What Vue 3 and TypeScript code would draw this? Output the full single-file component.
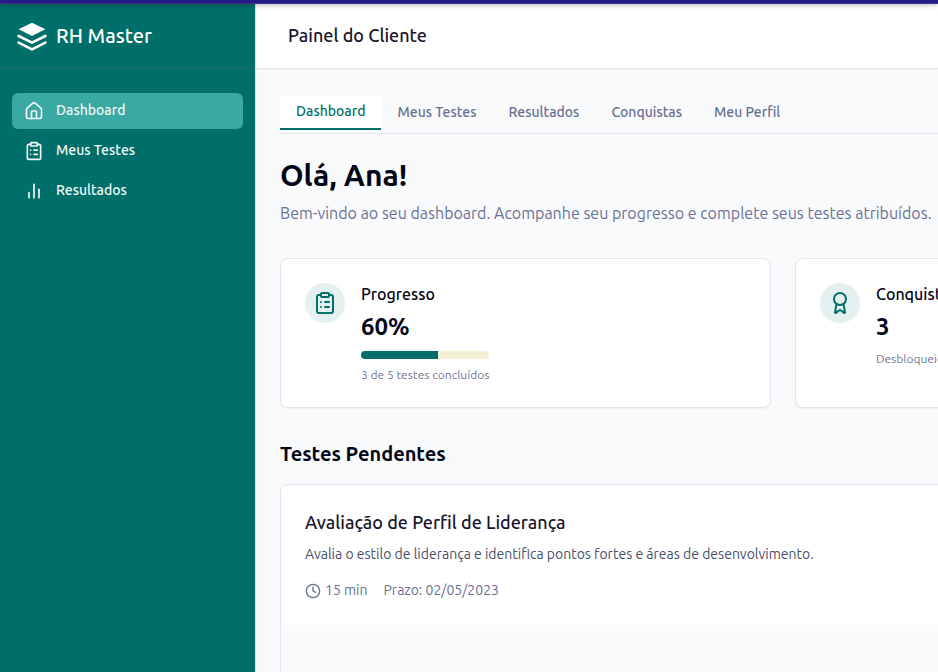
<script setup lang="ts">
import { ref } from 'vue'

interface NavItem {
  id: string
  label: string
  paths: string[]
}

interface PendingTest {
  title: string
  description: string
  minutes: number
  deadline: string
}

const clipboardPaths: string[] = [
  'M9 2h6a1 1 0 0 1 1 1v2a1 1 0 0 1-1 1H9a1 1 0 0 1-1-1V3a1 1 0 0 1 1-1z',
  'M16 4h2a2 2 0 0 1 2 2v14a2 2 0 0 1-2 2H6a2 2 0 0 1-2-2V6a2 2 0 0 1 2-2h2',
  'M12 11h4',
  'M12 16h4',
  'M8 11h.01',
  'M8 16h.01',
]

const navItems: NavItem[] = [
  {
    id: 'dashboard',
    label: 'Dashboard',
    paths: [
      'M15 21v-8a1 1 0 0 0-1-1h-4a1 1 0 0 0-1 1v8',
      'M3 10a2 2 0 0 1 .709-1.528l7-5.999a2 2 0 0 1 2.582 0l7 5.999A2 2 0 0 1 21 10v9a2 2 0 0 1-2 2H5a2 2 0 0 1-2-2z',
    ],
  },
  { id: 'testes', label: 'Meus Testes', paths: clipboardPaths },
  { id: 'resultados', label: 'Resultados', paths: ['M18 20V10', 'M12 20V4', 'M6 20v-6'] },
]

const tabs: string[] = ['Dashboard', 'Meus Testes', 'Resultados', 'Conquistas', 'Meu Perfil']
const activeTab = ref<string>('Dashboard')

const completed = 3
const total = 5
const percent = Math.round((completed / total) * 100)

const pendingTests: PendingTest[] = [
  {
    title: 'Avaliação de Perfil de Liderança',
    description: 'Avalia o estilo de liderança e identifica pontos fortes e áreas de desenvolvimento.',
    minutes: 15,
    deadline: '02/05/2023',
  },
]
</script>

<template>
  <div class="app">
    <div class="topbar"></div>
    <div class="shell">
      <aside class="sidebar">
        <div class="brand">
          <svg class="brand-logo" viewBox="0 0 24 24" aria-hidden="true">
            <path class="solid" d="M12 2 2 7l10 5 10-5z" />
            <path class="stroke" d="m2 12 10 5 10-5" />
            <path class="stroke" d="m2 17 10 5 10-5" />
          </svg>
          <span>RH Master</span>
        </div>
        <nav class="nav">
          <a
            v-for="item in navItems"
            :key="item.id"
            :href="'#' + item.id"
            class="nav-item"
            :class="{ active: item.id === 'dashboard' }"
          >
            <svg class="icon icon-md" viewBox="0 0 24 24" aria-hidden="true">
              <path v-for="p in item.paths" :key="p" :d="p" />
            </svg>
            <span>{{ item.label }}</span>
          </a>
        </nav>
      </aside>

      <div class="content">
        <header class="header">
          <span class="header-title">Painel do Cliente</span>
        </header>

        <main class="main">
          <div class="tabs" role="tablist">
            <button
              v-for="tab in tabs"
              :key="tab"
              type="button"
              role="tab"
              class="tab"
              :class="{ active: tab === activeTab }"
              :aria-selected="tab === activeTab"
              @click="activeTab = tab"
            >
              {{ tab }}
            </button>
          </div>

          <h1>Olá, Ana!</h1>
          <p class="lead">Bem-vindo ao seu dashboard. Acompanhe seu progresso e complete seus testes atribuídos.</p>

          <section class="stats">
            <article class="card stat">
              <div class="badge">
                <svg class="icon icon-lg" viewBox="0 0 24 24" aria-hidden="true">
                  <path v-for="p in clipboardPaths" :key="p" :d="p" />
                </svg>
              </div>
              <div>
                <h3 class="stat-title">Progresso</h3>
                <p class="stat-value">{{ percent }}%</p>
                <div class="progress">
                  <div class="progress-fill" :style="{ width: percent + '%' }"></div>
                </div>
                <p class="stat-note">{{ completed }} de {{ total }} testes concluídos</p>
              </div>
            </article>
            <article class="card stat">
              <div class="badge">
                <svg class="icon icon-lg" viewBox="0 0 24 24" aria-hidden="true">
                  <path d="m15.477 12.89 1.515 8.526a.5.5 0 0 1-.81.47l-3.58-2.687a1 1 0 0 0-1.197 0l-3.586 2.686a.5.5 0 0 1-.81-.469l1.514-8.526" />
                  <circle cx="12" cy="8" r="6" />
                </svg>
              </div>
              <div>
                <h3 class="stat-title">Conquistas</h3>
                <p class="stat-value">3</p>
                <p class="stat-note">Desbloqueie</p>
              </div>
            </article>
          </section>

          <h2>Testes Pendentes</h2>
          <section class="pending">
            <article v-for="test in pendingTests" :key="test.title" class="card test">
              <div class="test-body">
                <h3 class="test-title">{{ test.title }}</h3>
                <p class="test-text">{{ test.description }}</p>
                <div class="meta">
                  <span class="duration">
                    <svg class="icon icon-sm" viewBox="0 0 24 24" aria-hidden="true">
                      <circle cx="12" cy="12" r="10" />
                      <path d="M12 6v6l4 2" />
                    </svg>
                    <span>{{ test.minutes }} min</span>
                  </span>
                  <span>Prazo: {{ test.deadline }}</span>
                </div>
              </div>
              <div class="test-footer"></div>
            </article>
          </section>
        </main>
      </div>
    </div>
  </div>
</template>

<style>
body {
  background: #f9fafc;
}
</style>

<style scoped>
.app {
  display: flex;
  flex-direction: column;
  height: 100vh;
  overflow: hidden;
  background: #f9fafc;
  color: #020617;
  font-family: Ubuntu, "Open Sans", "Noto Sans", sans-serif;
  font-size: 14px;
  line-height: 20px;
}

h1,
h2,
h3,
p {
  margin: 0;
}

.topbar {
  position: relative;
  z-index: 1;
  flex: none;
  height: 4px;
  box-sizing: border-box;
  background: #241b85;
  border-bottom: 1px solid #3f2d86;
  box-shadow: 0 1px 5px rgba(0, 0, 0, 0.3);
}

.shell {
  display: flex;
  flex: 1;
  min-height: 0;
}

.sidebar {
  flex: none;
  width: 256px;
  box-sizing: border-box;
  background: #006f69;
  border-right: 1px solid #e2e5f0;
  color: #ffffff;
}

.brand {
  display: flex;
  align-items: center;
  gap: 8px;
  height: 64px;
  padding: 0 16px;
  border-bottom: 1px solid #266862;
  font-size: 20px;
  line-height: 28px;
  font-weight: 550;
}

.brand-logo {
  width: 32px;
  height: 32px;
}

.solid {
  fill: #ffffff;
}

.stroke {
  fill: none;
  stroke: #ffffff;
  stroke-width: 2;
  stroke-linecap: round;
  stroke-linejoin: round;
}

.nav {
  display: flex;
  flex-direction: column;
  gap: 4px;
  padding: 24px 12px;
}

.nav-item {
  display: flex;
  align-items: center;
  gap: 12px;
  height: 36px;
  padding: 0 12px;
  border-radius: 6px;
  color: #f1f8f8;
  font-weight: 500;
  text-decoration: none;
}

.nav-item span {
  padding-bottom: 2px;
}

.nav-item.active {
  background: #3ba9a3;
}

.icon {
  flex: none;
  fill: none;
  stroke: currentColor;
  stroke-width: 2;
  stroke-linecap: round;
  stroke-linejoin: round;
}

.icon-sm {
  width: 16px;
  height: 16px;
}

.icon-md {
  width: 20px;
  height: 20px;
}

.icon-lg {
  width: 24px;
  height: 24px;
}

.content {
  flex: 1;
  min-width: 0;
  overflow: hidden;
}

.header {
  display: flex;
  align-items: center;
  height: 64px;
  padding: 0 32px;
  background: #ffffff;
  border-bottom: 1px solid #e2e5f0;
  box-shadow: 0 1px 2px rgba(0, 0, 0, 0.05);
}

.header-title {
  padding-bottom: 2px;
  color: #18152e;
  font-size: 18px;
  line-height: 28px;
  font-weight: 500;
}

.main {
  padding: 24px;
}

.tabs {
  display: flex;
  align-items: center;
  height: 40px;
  margin-bottom: 23px;
  margin-right: -24px;
  border-bottom: 1px solid #e2e5f0;
}

.tab {
  padding: 5px 16px 7px;
  border: 0;
  background: transparent;
  color: #68708f;
  font: inherit;
  font-weight: 500;
  white-space: nowrap;
}

.tab.active {
  background: #ffffff;
  border-bottom: 2px solid #006f69;
  color: #006f69;
}

h1 {
  margin-bottom: 8px;
  font-size: 30px;
  line-height: 36px;
  font-weight: 700;
}

.lead {
  color: #6b7394;
  font-size: 16px;
  line-height: 24px;
  white-space: nowrap;
}

.card {
  background: #ffffff;
  border: 1px solid #e2e5f0;
  border-radius: 8px;
  box-shadow: 0 1px 2px rgba(0, 0, 0, 0.05);
}

.stats {
  display: grid;
  grid-template-columns: repeat(2, minmax(491px, 1fr));
  gap: 24px;
  margin: 33px 0 32px;
}

.stat {
  display: flex;
  align-items: flex-start;
  gap: 16px;
  padding: 24px;
}

.badge {
  display: flex;
  align-items: center;
  justify-content: center;
  width: 40px;
  height: 40px;
  border-radius: 50%;
  background: #e5f0f0;
  color: #006f69;
}

.stat-title {
  font-size: 16px;
  line-height: 22px;
  font-weight: 500;
}

.stat-value {
  margin: 6px 0 8px;
  font-size: 24px;
  line-height: 32px;
  font-weight: 700;
}

.progress {
  width: 128px;
  height: 8px;
  margin-bottom: 8px;
  overflow: hidden;
  border-radius: 4px;
  background: #f3efd2;
}

.progress-fill {
  height: 100%;
  background: #006f69;
}

.stat-note {
  color: #6f7691;
  font-size: 12px;
  line-height: 16px;
}

h2 {
  margin-bottom: 16px;
  font-size: 20px;
  line-height: 28px;
  font-weight: 600;
}

.pending {
  margin-right: -48px;
}

.test {
  overflow: hidden;
}

.test-body {
  padding: 23px 24px 24px;
}

.test-title {
  margin-bottom: 8px;
  color: #18152e;
  font-size: 18px;
  line-height: 28px;
  font-weight: 550;
}

.test-text {
  margin-bottom: 16px;
  color: #475069;
}

.meta {
  display: flex;
  gap: 16px;
  color: #68708f;
}

.duration {
  display: flex;
  align-items: flex-end;
  gap: 4px;
  height: 21px;
}

.duration .icon {
  margin-bottom: 2px;
}

.duration span {
  align-self: flex-start;
}

.test-footer {
  height: 64px;
  background: #f9fafc;
}
</style>
